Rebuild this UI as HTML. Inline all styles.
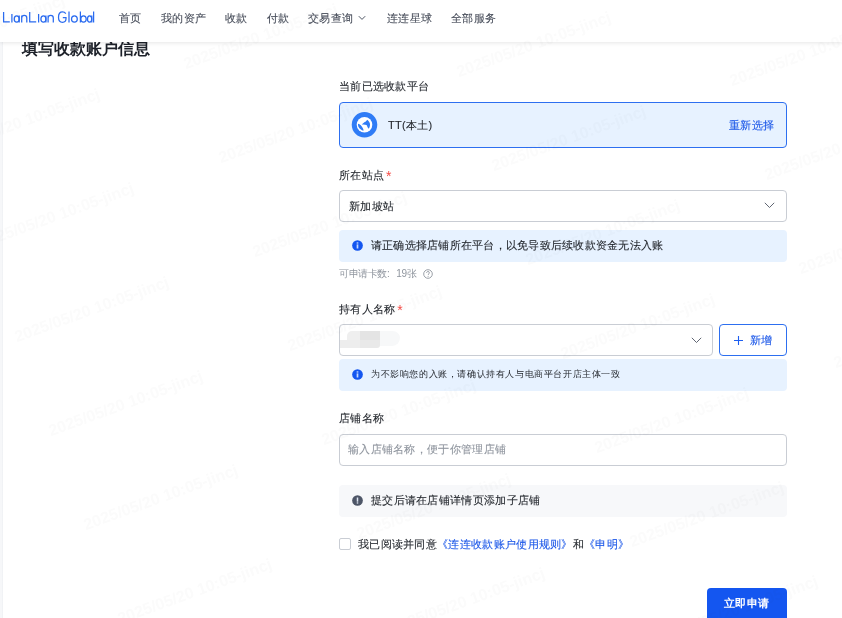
<!DOCTYPE html>
<html><head><meta charset="utf-8">
<style>
*{box-sizing:border-box;margin:0;padding:0}
html,body{width:842px;height:618px;overflow:hidden;background:#fff}
body{font-family:"Liberation Sans",sans-serif;color:#1f2329;position:relative}
.a{position:absolute;white-space:nowrap;line-height:15px}
.t11{font-size:11px;letter-spacing:0.3px;-webkit-text-stroke:0.1px currentColor}
.dk{-webkit-text-stroke:0.1px currentColor}
#leftstrip{position:absolute;left:0;top:0;width:3px;height:618px;background:linear-gradient(90deg,#f6f7f9 0,#f6f7f9 1.5px,#eef0f3 3px)}
#header{position:absolute;left:0;top:0;width:842px;height:42px;background:#fff;box-shadow:0 1px 4px rgba(0,0,0,0.10);z-index:5}
.nav{color:#454b58;top:11px}
.box{position:absolute;border-radius:4px}
.lbl{color:#1f2329}
.req{color:#f54a45;font-size:14px;position:relative;top:2px;margin-left:-1.5px;line-height:10px;-webkit-text-stroke:0}
.wm{position:absolute;white-space:nowrap;font-size:16px;line-height:16px;font-weight:bold;color:#fbfbfb;mix-blend-mode:multiply;transform-origin:0 100%;transform:rotate(-20deg);z-index:10;pointer-events:none}
</style></head><body>
<div id="leftstrip"></div>
<div id="header">
  <svg style="position:absolute;left:0;top:0" width="100" height="30" viewBox="0 0 100 30" fill="none" stroke="#2a6bf0" stroke-width="1.25">
  <path d="M3.6 11.9 V21.9 H9.8"/>
  <path d="M11.9 14 V22.5"/>
  <ellipse cx="16.7" cy="19" rx="2.5" ry="3.2"/><path d="M19.2 15.5 V22.5"/>
  <path d="M21.7 22.5 V15.5 M21.7 18 C21.7 16.2 23 15.4 24.3 15.4 C25.8 15.4 26.8 16.3 26.8 18 V22.5"/>
  <path d="M29.7 11.9 V21.9 H36.2"/>
  <path d="M38.6 14 V22.5"/>
  <ellipse cx="43.4" cy="19" rx="2.5" ry="3.2"/><path d="M45.9 15.5 V22.5"/>
  <path d="M48.1 22.5 V15.5 M48.1 18 C48.1 16.2 49.4 15.4 50.7 15.4 C52.2 15.4 53.3 16.3 53.3 18 V22.5"/>
  <path d="M65.8 13.6 C65 12.5 63.9 11.9 62.5 11.9 C59.8 11.9 58.5 14.2 58.5 17.2 C58.5 20.3 59.8 22.3 62.5 22.3 C64.8 22.3 66 21 66 18.8 V17.6 H62.8"/>
  <path d="M69 11.5 V22.5"/>
  <ellipse cx="74.4" cy="19" rx="2.9" ry="3.2"/>
  <path d="M80.4 11.5 V22.5"/><ellipse cx="83.5" cy="19" rx="2.7" ry="3.2"/>
  <ellipse cx="89.6" cy="19" rx="2.1" ry="3.2"/><path d="M91.8 15.5 V22.5"/>
  <path d="M93.6 11.5 V22.5"/>
</svg>
  <div class="a t11 nav dk" style="left:119px">首页</div>
  <div class="a t11 nav dk" style="left:161px">我的资产</div>
  <div class="a t11 nav dk" style="left:225px">收款</div>
  <div class="a t11 nav dk" style="left:267px">付款</div>
  <div class="a t11 nav dk" style="left:308px">交易查询</div>
  <svg style="position:absolute;left:358px;top:15px" width="8" height="6" viewBox="0 0 8 6"><path d="M0.8 1.2 L4 4.4 L7.2 1.2" fill="none" stroke="#4e5563" stroke-width="1"/></svg>
  <div class="a t11 nav dk" style="left:387px">连连星球</div>
  <div class="a t11 nav dk" style="left:451px">全部服务</div>
</div>

<div class="a" style="left:22px;top:38px;font-size:16px;font-weight:bold;color:#1d2129;line-height:22px">填写收款账户信息</div>

<!-- platform -->
<div class="a t11 lbl" style="left:339px;top:79px">当前已选收款平台</div>
<div class="box" style="left:339px;top:102px;width:448px;height:46px;background:#e7f2ff;border:1px solid #2d6ff0"></div>
<svg style="position:absolute;left:348px;top:108px" width="34" height="34" viewBox="0 0 618 618">
  <circle cx="300" cy="305" r="232" fill="#2f7cf6"/>
  <circle cx="300" cy="305" r="142" fill="#fff"/>
  <path d="M182 288 C218 296 252 332 270 368 C280 388 285 405 280 414 C245 402 208 376 190 340 C182 322 179 304 182 288 Z" fill="#2f7cf6"/>
  <path d="M248 298 C262 290 280 275 292 262 C298 256 310 256 318 250 C330 242 340 225 350 213 C370 225 392 255 400 290 C402 322 394 352 376 377 C360 367 350 342 345 320 C335 300 300 302 248 298 Z" fill="#2f7cf6"/>
</svg>
<div class="a t11 lbl" style="left:388px;top:118px">TT(本土)</div>
<div class="a t11" style="left:729px;top:118px;color:#1a56e8">重新选择</div>

<!-- site -->
<div class="a t11 lbl" style="left:339px;top:168px">所在站点 <span class="req">*</span></div>
<div class="box" style="left:339px;top:190px;width:448px;height:32px;background:#fff;border:1px solid #c9cdd4"></div>
<div class="a t11 lbl" style="left:349px;top:199px">新加坡站</div>
<svg style="position:absolute;left:764px;top:202px" width="11" height="7" viewBox="0 0 11 7"><path d="M0.8 0.8 L5.5 5.5 L10.2 0.8" fill="none" stroke="#4e5563" stroke-width="0.9"/></svg>
<div class="box" style="left:339px;top:230px;width:448px;height:32px;background:#e7f2ff"></div>
<svg style="position:absolute;left:352px;top:240px" width="11" height="11" viewBox="0 0 11 11"><circle cx="5.5" cy="5.5" r="5.35" fill="#1456f0"/><rect x="4.65" y="4.4" width="1.7" height="4.1" fill="#c4d8ff"/><rect x="4.65" y="2.3" width="1.7" height="1.3" fill="#c4d8ff"/></svg>
<div class="a t11 lbl" style="left:371px;top:238px;letter-spacing:0.24px">请正确选择店铺所在平台，以免导致后续收款资金无法入账</div>
<div class="a" style="left:339px;top:266px;font-size:10px;letter-spacing:-0.4px;color:#8f959e">可申请卡数:<span style="margin-left:4.5px"> </span>19张</div>
<svg style="position:absolute;left:423px;top:269px" width="10" height="10" viewBox="0 0 10 10"><circle cx="5" cy="5" r="4.3" fill="none" stroke="#8f959e" stroke-width="0.9"/><path d="M3.6 3.9 C3.6 2.9 4.3 2.5 5 2.5 C5.8 2.5 6.4 3 6.4 3.8 C6.4 4.7 5.2 4.8 5.2 5.9" fill="none" stroke="#8f959e" stroke-width="0.9"/><circle cx="5.1" cy="7.3" r="0.55" fill="#8f959e"/></svg>

<!-- holder -->
<div class="a t11 lbl" style="left:339px;top:302px">持有人名称 <span class="req">*</span></div>
<div class="box" style="left:339px;top:324px;width:374px;height:32px;background:#fff;border:1px solid #c9cdd4"></div>
<div style="position:absolute;left:340px;top:331px;width:60px;height:17px;filter:blur(0.4px)">
<div style="position:absolute;left:7px;top:0;width:13px;height:9px;background:#efefef;border-top-left-radius:5px"></div>
<div style="position:absolute;left:20px;top:0;width:20px;height:9px;background:#e4e4e4"></div>
<div style="position:absolute;left:40px;top:0;width:20px;height:15px;background:#f7f8f9;border-radius:0 8px 8px 0/0 7px 9px 0"></div>
<div style="position:absolute;left:0;top:9px;width:20px;height:8px;background:#ededed"></div>
<div style="position:absolute;left:20px;top:9px;width:20px;height:8px;background:#e9e9e9;border-bottom-right-radius:3px"></div>
</div>
<svg style="position:absolute;left:691px;top:337px" width="11" height="7" viewBox="0 0 11 7"><path d="M0.8 0.8 L5.5 5.5 L10.2 0.8" fill="none" stroke="#4e5563" stroke-width="0.9"/></svg>
<div class="box" style="left:719px;top:324px;width:68px;height:32px;background:#fff;border:1px solid #2d6ff0"></div>
<svg style="position:absolute;left:733px;top:335px" width="11" height="11" viewBox="0 0 11 11"><path d="M5.5 1 V10 M1 5.5 H10" stroke="#1d5ef0" stroke-width="1.1"/></svg>
<div class="a t11" style="left:750px;top:333px;color:#1a56e8">新增</div>
<div class="box" style="left:339px;top:359px;width:448px;height:32px;background:#e7f2ff"></div>
<svg style="position:absolute;left:352px;top:369px" width="11" height="11" viewBox="0 0 11 11"><circle cx="5.5" cy="5.5" r="5.35" fill="#1456f0"/><rect x="4.65" y="4.4" width="1.7" height="4.1" fill="#c4d8ff"/><rect x="4.65" y="2.3" width="1.7" height="1.3" fill="#c4d8ff"/></svg>
<div class="a" style="left:371px;top:367px;font-size:9px;letter-spacing:0.6px;color:#1f2329">为不影响您的入账，请确认持有人与电商平台开店主体一致</div>

<!-- shop -->
<div class="a t11 lbl" style="left:339px;top:411px">店铺名称</div>
<div class="box" style="left:339px;top:434px;width:448px;height:32px;background:#fff;border:1px solid #c9cdd4"></div>
<div class="a t11" style="left:348px;top:442px;color:#8f959e">输入店铺名称，便于你管理店铺</div>
<div class="box" style="left:339px;top:485px;width:448px;height:32px;background:#f7f8fa"></div>
<svg style="position:absolute;left:352.4px;top:494.7px" width="11" height="11" viewBox="0 0 11 11"><circle cx="5.5" cy="5.5" r="5.35" fill="#4e5667"/><rect x="4.75" y="2.5" width="1.5" height="4.2" fill="#dfe6f2"/><rect x="4.75" y="7.3" width="1.5" height="1.3" fill="#dfe6f2"/></svg>
<div class="a t11 lbl" style="left:371px;top:493px">提交后请在店铺详情页添加子店铺</div>

<!-- agree -->
<div class="box" style="left:339px;top:538px;width:12px;height:12px;background:#fff;border:1px solid #c9cdd4;border-radius:2px"></div>
<div class="a t11 lbl" style="left:358px;top:537px">我已阅读并同意<span style="color:#1a56e8">《连连收款账户使用规则》</span>和<span style="color:#1a56e8">《申明》</span></div>

<div class="box" style="left:707px;top:588px;width:80px;height:40px;background:#1456f0"></div>
<div class="a" style="left:724px;top:596px;font-size:11px;letter-spacing:0.3px;color:#fff;font-weight:bold">立即申请</div>
<div id="wmk"><div class="wm" style="left:-120.3px;top:-47.0px">2025/05/20 10:05-jincj</div><div class="wm" style="left:152.7px;top:-38.4px">2025/05/20 10:05-jincj</div><div class="wm" style="left:425.7px;top:-29.8px">2025/05/20 10:05-jincj</div><div class="wm" style="left:698.7px;top:-21.2px">2025/05/20 10:05-jincj</div><div class="wm" style="left:-85.8px;top:47.0px">2025/05/20 10:05-jincj</div><div class="wm" style="left:187.2px;top:55.6px">2025/05/20 10:05-jincj</div><div class="wm" style="left:460.2px;top:64.2px">2025/05/20 10:05-jincj</div><div class="wm" style="left:733.2px;top:72.8px">2025/05/20 10:05-jincj</div><div class="wm" style="left:-51.3px;top:141.0px">2025/05/20 10:05-jincj</div><div class="wm" style="left:221.7px;top:149.6px">2025/05/20 10:05-jincj</div><div class="wm" style="left:494.7px;top:158.2px">2025/05/20 10:05-jincj</div><div class="wm" style="left:767.7px;top:166.8px">2025/05/20 10:05-jincj</div><div class="wm" style="left:-16.8px;top:235.0px">2025/05/20 10:05-jincj</div><div class="wm" style="left:256.2px;top:243.6px">2025/05/20 10:05-jincj</div><div class="wm" style="left:529.2px;top:252.2px">2025/05/20 10:05-jincj</div><div class="wm" style="left:802.2px;top:260.8px">2025/05/20 10:05-jincj</div><div class="wm" style="left:17.7px;top:329.0px">2025/05/20 10:05-jincj</div><div class="wm" style="left:290.7px;top:337.6px">2025/05/20 10:05-jincj</div><div class="wm" style="left:563.7px;top:346.2px">2025/05/20 10:05-jincj</div><div class="wm" style="left:836.7px;top:354.8px">2025/05/20 10:05-jincj</div><div class="wm" style="left:52.2px;top:423.0px">2025/05/20 10:05-jincj</div><div class="wm" style="left:325.2px;top:431.6px">2025/05/20 10:05-jincj</div><div class="wm" style="left:598.2px;top:440.2px">2025/05/20 10:05-jincj</div><div class="wm" style="left:871.2px;top:448.8px">2025/05/20 10:05-jincj</div><div class="wm" style="left:-186.3px;top:508.4px">2025/05/20 10:05-jincj</div><div class="wm" style="left:86.7px;top:517.0px">2025/05/20 10:05-jincj</div><div class="wm" style="left:359.7px;top:525.6px">2025/05/20 10:05-jincj</div><div class="wm" style="left:632.7px;top:534.2px">2025/05/20 10:05-jincj</div><div class="wm" style="left:-151.8px;top:602.4px">2025/05/20 10:05-jincj</div><div class="wm" style="left:121.2px;top:611.0px">2025/05/20 10:05-jincj</div><div class="wm" style="left:394.2px;top:619.6px">2025/05/20 10:05-jincj</div><div class="wm" style="left:667.2px;top:628.2px">2025/05/20 10:05-jincj</div></div>
</body></html>
